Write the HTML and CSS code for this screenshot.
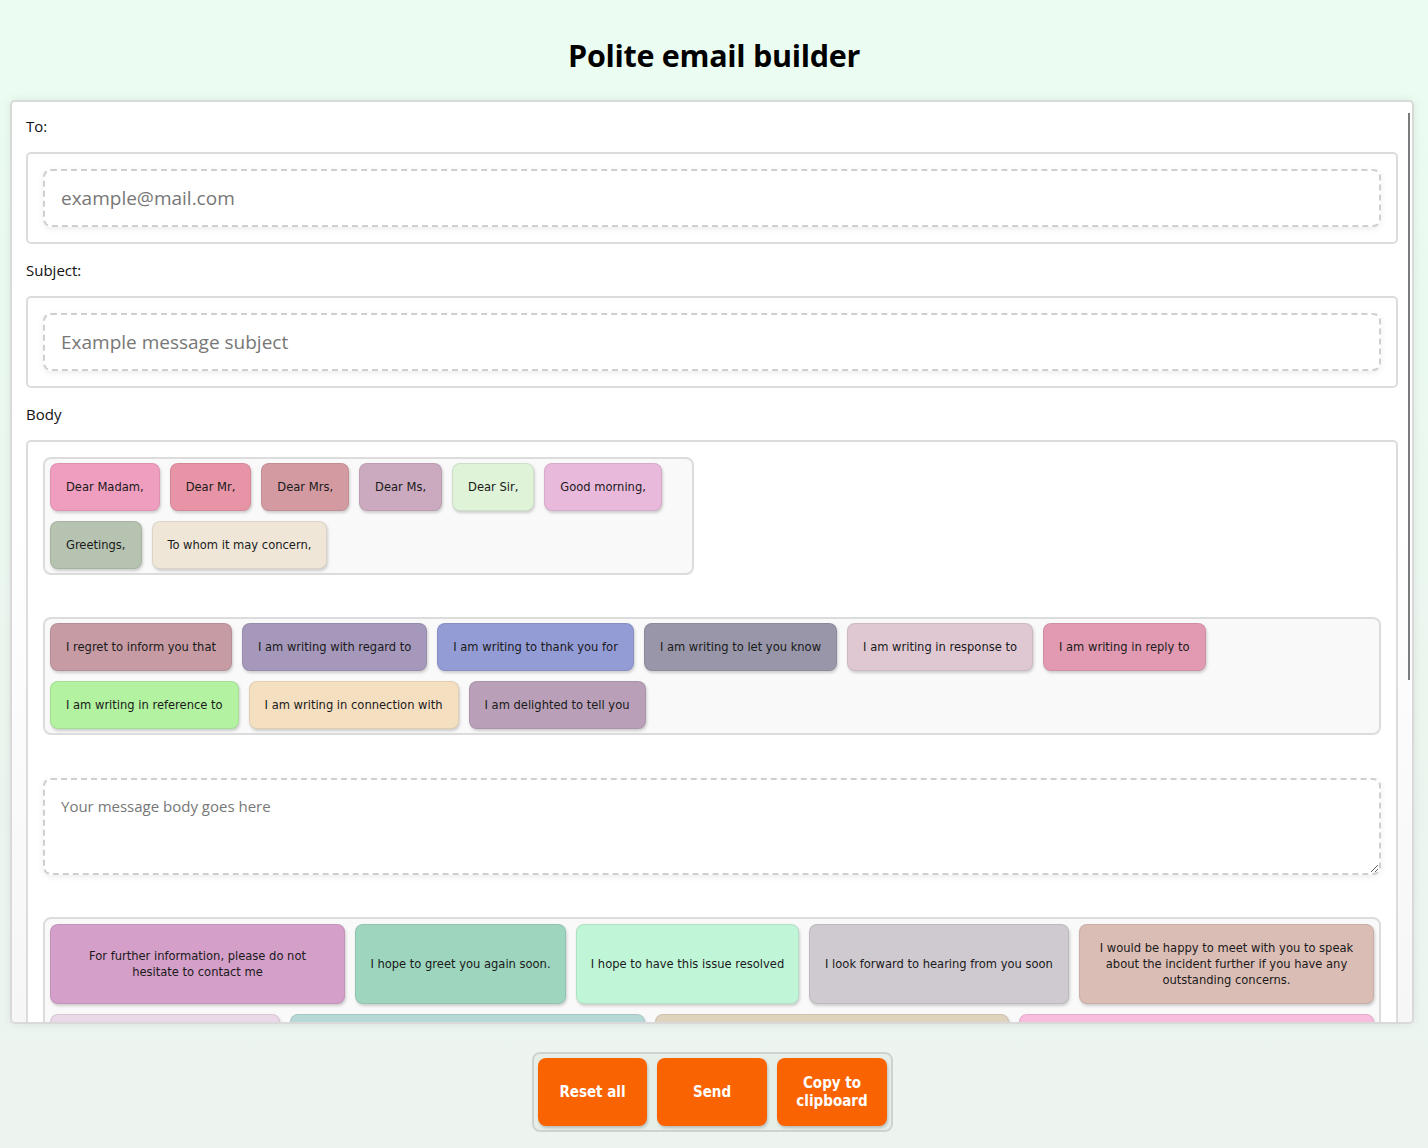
FILE: index.html
```html
<!DOCTYPE html>
<html lang="en">
<head>
<meta charset="utf-8">
<title>Polite email builder</title>
<link rel="stylesheet" href="styles.css">
</head>
<body>
<header class="page-header">
  <h1>Polite email builder</h1>
</header>

<div class="card-wrap">
<main class="card">
  <label class="field-label" for="to">To:</label>
  <div class="field-box">
    <input class="field-input" id="to" type="email" placeholder="example@mail.com">
  </div>

  <label class="field-label" for="subject">Subject:</label>
  <div class="field-box">
    <input class="field-input" id="subject" type="text" placeholder="Example message subject">
  </div>

  <div class="field-label">Body</div>
  <div class="body-box">
    <div class="chip-group greetings">
      <button class="chip c-madam">Dear Madam,</button>
      <button class="chip c-mr">Dear Mr,</button>
      <button class="chip c-mrs">Dear Mrs,</button>
      <button class="chip c-ms">Dear Ms,</button>
      <button class="chip c-sir">Dear Sir,</button>
      <button class="chip c-morning">Good morning,</button>
      <button class="chip c-greetings">Greetings,</button>
      <button class="chip c-whom">To whom it may concern,</button>
    </div>

    <div class="chip-group openers">
      <button class="chip c-regret">I regret to inform you that</button>
      <button class="chip c-regard">I am writing with regard to</button>
      <button class="chip c-thank">I am writing to thank you for</button>
      <button class="chip c-letknow">I am writing to let you know</button>
      <button class="chip c-response">I am writing in response to</button>
      <button class="chip c-reply">I am writing in reply to</button>
      <button class="chip c-reference">I am writing in reference to</button>
      <button class="chip c-connection">I am writing in connection with</button>
      <button class="chip c-delighted">I am delighted to tell you</button>
    </div>

    <textarea class="body-text" placeholder="Your message body goes here"></textarea>

    <div class="chip-group closings">
      <button class="chip c-further w-295">For further information, please do not hesitate to contact me</button>
      <button class="chip c-greet w-211">I hope to greet you again soon.</button>
      <button class="chip c-resolved w-223">I hope to have this issue resolved</button>
      <button class="chip c-forward w-260">I look forward to hearing from you soon</button>
      <button class="chip c-meet w-295">I would be happy to meet with you to speak about the incident further if you have any outstanding concerns.</button>
      <button class="chip c-time w-230">Thank you for your time.</button>
      <button class="chip c-help w-355">Please let me know if there is anything else I can do.</button>
      <button class="chip c-questions w-354">Should you have any questions, feel free to reach out.</button>
      <button class="chip c-advance w-355">Thank you in advance for your help with this matter.</button>
    </div>

    <div class="chip-group signoffs">
      <button class="chip c-regards">Kind regards,</button>
      <button class="chip c-wishes">Best wishes,</button>
      <button class="chip c-sincerely">Yours sincerely,</button>
      <button class="chip c-faithfully">Yours faithfully,</button>
      <button class="chip c-respect">Respectfully,</button>
    </div>
  </div>

  <label class="field-label" for="from">From:</label>
  <div class="field-box">
    <input class="field-input" id="from" type="text" placeholder="Your name">
  </div>
</main>
<div class="scroll-thumb" aria-hidden="true"></div>
</div>

<footer class="actions">
  <div class="action-group">
    <button class="action-btn btn-reset">Reset all</button>
    <button class="action-btn">Send</button>
    <button class="action-btn">Copy to clipboard</button>
  </div>
</footer>
</body>
</html>
```

FILE: styles.css
```css
* { box-sizing: border-box; }

html, body {
  margin: 0;
  height: 100%;
}

body {
  background: linear-gradient(180deg, #ebfdf2 0%, #ebf6ef 60%, #edf4ef 100%);
  font-family: "Open Sans", "Noto Sans", sans-serif;
  color: #111;
  overflow: hidden;
}

.page-header {
  height: 100px;
  display: flex;
  align-items: center;
  justify-content: center;
  padding-top: 10px;
}

.page-header h1 {
  margin: 0;
  font-size: 30.5px;
  font-weight: 700;
  color: #000;
  letter-spacing: -0.3px;
}

.card-wrap {
  position: relative;
  margin: 0 14px 0 10px;
}

.card {
  height: 924px;
  background: linear-gradient(180deg, #ffffff 0%, #ffffff 45%, #f6f6f6 100%);
  border: 2px solid #d9d9d9;
  border-radius: 5px;
  box-shadow: 0 0 10px rgba(0, 0, 0, 0.08);
  padding: 14px 14px 40px 14px;
  overflow-y: scroll;
  scrollbar-width: none;
}

.card::-webkit-scrollbar { display: none; }

.scroll-thumb {
  position: absolute;
  top: 13px;
  right: 4px;
  width: 2px;
  height: 567px;
  background: #7b7b7b;
}

.field-label {
  display: block;
  font-size: 15px;
  line-height: 20px;
  color: #111;
  margin-bottom: 16px;
}

.field-box + .field-label,
.body-box + .field-label {
  margin-top: 16px;
}

.field-box {
  border: 2px solid #dcdcdc;
  border-radius: 5px;
  padding: 15px;
  background: #fff;
}

.field-input {
  display: block;
  width: 100%;
  height: 58px;
  border: 2px dashed #cfcfcf;
  border-radius: 8px;
  box-shadow: 0 2px 6px rgba(0, 0, 0, 0.07);
  padding: 0 16px;
  font-family: "Open Sans", "Noto Sans", sans-serif;
  font-size: 19px;
  color: #333;
  background: #fff;
  outline: none;
}

.field-input::placeholder { color: #777; }

.body-box {
  border: 2px solid #dcdcdc;
  border-radius: 5px;
  padding: 15px;
  background: #fff;
}

.chip-group {
  display: flex;
  flex-wrap: wrap;
  gap: 10px;
  padding: 4px 5px;
  background: #f9f9f9;
  border: 2px solid #dcdcdc;
  border-radius: 8px;
  margin-bottom: 42px;
}

.chip-group.greetings { width: 651px; }
.chip-group.openers { margin-bottom: 43px; }
.chip-group.closings { padding-top: 5px; }

.chip {
  font-family: "DejaVu Sans Condensed", "DejaVu Sans", sans-serif;
  font-stretch: condensed;
  font-size: 12.8px;
  line-height: 16px;
  color: #1a1a1a;
  padding: 15px 15px;
  border: 1px solid rgba(0, 0, 0, 0.08);
  border-radius: 8px;
  box-shadow: 1px 2px 3px rgba(0, 0, 0, 0.18);
  cursor: pointer;
  text-align: center;
}

.closings .chip { padding: 15px 16px; }
.closings .chip.c-resolved,
.closings .chip.c-greet,
.closings .chip.c-forward { padding: 15px 8px; }

.w-295 { width: 295px; }
.w-211 { width: 211px; }
.w-223 { width: 223px; }
.w-260 { width: 260px; }
.w-230 { width: 230px; }
.w-355 { width: 355px; }
.w-354 { width: 354px; }

.c-madam { background: #f09ebf; }
.c-mr { background: #e795a6; }
.c-mrs { background: #d49aa2; }
.c-ms { background: #cbaac0; }
.c-sir { background: #dff3d8; }
.c-morning { background: #e9b9dc; }
.c-greetings { background: #b5c3b0; }
.c-whom { background: #efe6d8; }

.c-regret { background: #c69ba4; }
.c-regard { background: #a598bb; }
.c-thank { background: #949cd6; }
.c-letknow { background: #9896a8; }
.c-response { background: #e0c8d3; }
.c-reply { background: #e29ab2; }
.c-reference { background: #b2f2a0; }
.c-connection { background: #f5dfc1; }
.c-delighted { background: #b9a0b8; }

.c-further { background: #d49fc8; }
.c-greet { background: #9dd5be; }
.c-resolved { background: #c0f5d8; }
.c-forward { background: #cfc9d0; }
.c-meet { background: #dabdb5; }
.c-time { background: #ead8e8; }
.c-help { background: #b6d8d6; }
.c-questions { background: #ded3bd; }
.c-advance { background: #f8bcdc; }

.c-regards { background: #c9d9f0; }
.c-wishes { background: #f3d9a6; }
.c-sincerely { background: #c7e8c0; }
.c-faithfully { background: #e8c3c3; }
.c-respect { background: #d6cde9; }

.body-text {
  display: block;
  width: 100%;
  height: 97px;
  border: 2px dashed #cfcfcf;
  border-radius: 8px;
  box-shadow: 0 2px 6px rgba(0, 0, 0, 0.07);
  padding: 16px 16px;
  font-family: "Open Sans", "Noto Sans", sans-serif;
  font-size: 15px;
  line-height: 20px;
  color: #333;
  outline: none;
  margin-bottom: 42px;
}

.body-text::placeholder { color: #777; }

.actions {
  display: flex;
  justify-content: center;
  margin-top: 28px;
  padding-right: 3px;
}

.action-group {
  display: flex;
  gap: 10px;
  padding: 4px;
  background: #e6eee8;
  border: 2px solid #cdd4cf;
  border-radius: 8px;
}

.action-btn {
  width: 110px;
  height: 68px;
  border: none;
  border-radius: 8px;
  background: #f96302;
  color: #fff;
  font-family: "DejaVu Sans Condensed", "DejaVu Sans", sans-serif;
  font-stretch: condensed;
  font-weight: 700;
  font-size: 15px;
  line-height: 18px;
  padding: 0 14px;
  box-shadow: 1px 2px 3px rgba(0, 0, 0, 0.2);
  cursor: pointer;
}

.btn-reset { width: 109px; }
```
